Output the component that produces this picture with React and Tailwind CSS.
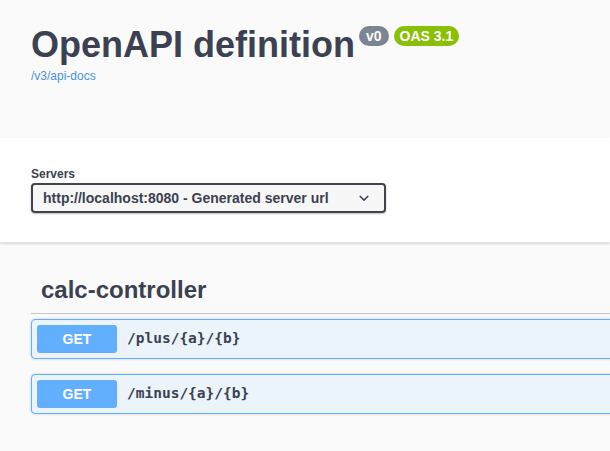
import React from "react";

const sans = { fontFamily: '"Liberation Sans", Arial, sans-serif' };

function Op({ path }) {
  return (
    <div className="flex items-center h-[40px] border border-[#61affe] bg-[#ebf3fb] rounded-[4px] p-[5px] shadow-[0_0_3px_rgba(0,0,0,0.19)]">
      <span className="w-[80px] h-[28px] flex items-center justify-center bg-[#61affe] text-white text-[14px] font-bold rounded-[3px]">
        GET
      </span>
      <span
        className="pl-[10px] text-[14.5px] font-bold text-[#3b4151]"
        style={{ fontFamily: '"DejaVu Sans Mono", monospace' }}
      >
        {path}
      </span>
    </div>
  );
}

export default function App() {
  return (
    <div className="w-[610px] h-[451px] overflow-hidden bg-[#fafafa] text-[#3b4151]" style={sans}>
      <div className="h-[138px] pl-[31px] pt-[22px]">
        <div className="flex items-start">
          <h1 className="text-[36px] font-bold leading-[46px] text-[#3b4151]">OpenAPI definition</h1>
          <span className="ml-[4px] mt-[4px] h-[20px] px-[7px] flex items-center rounded-full bg-[#7d8492] text-white text-[14px] font-bold">
            v0
          </span>
          <span className="ml-[5px] mt-[4px] h-[20px] px-[6px] flex items-center rounded-full bg-[#89bf04] text-white text-[14px] font-bold">
            OAS 3.1
          </span>
        </div>
        <div className="text-[12px] leading-[14px] text-[#4990e2] mt-[1px]">/v3/api-docs</div>
      </div>
      <div className="h-[105px] bg-white shadow-[0_1px_2px_0_rgba(0,0,0,0.15)] border-b border-[#e6e6e6] pl-[31px] pt-[29px] relative">
        <div className="text-[12px] font-bold leading-[14px] text-[#3b4151]">Servers</div>
        <div className="mt-[2px] w-[355px] h-[30px] border-2 border-[#41444e] rounded-[4px] bg-[#f7f7f7] shadow-[0_1px_2px_0_rgba(0,0,0,0.25)] flex items-center pl-[10px] pr-[10px] justify-between">
          <span className="text-[14px] font-bold text-[#3b4151]">http://localhost:8080 - Generated server url</span>
          <svg width="20" height="20" viewBox="0 0 20 20">
            <path
              fill="#3b4151"
              d="M13.418 7.859a.695.695 0 0 1 .978 0 .68.68 0 0 1 0 .969l-3.908 3.83a.697.697 0 0 1-.979 0l-3.908-3.83a.68.68 0 0 1 0-.969.695.695 0 0 1 .978 0L10 11l3.418-3.141z"
            />
          </svg>
        </div>
      </div>
      <div className="pl-[31px] w-[1000px] pt-[23px]">
        <div className="border-b border-[#c4c6cb] h-[48px] flex items-center pl-[10px]">
          <h3 className="text-[24px] font-bold text-[#3b4151] leading-[30px]">calc-controller</h3>
        </div>
        <div className="mt-[5px] flex flex-col gap-[15px]">
          <Op path="/plus/{a}/{b}" />
          <Op path="/minus/{a}/{b}" />
        </div>
      </div>
    </div>
  );
}
